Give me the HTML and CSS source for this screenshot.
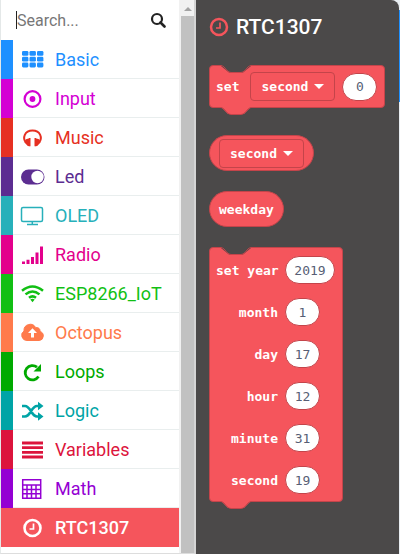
FILE: index.html
```html
<!DOCTYPE html>
<html lang="en">
<head>
<meta charset="utf-8">
<title>Toolbox</title>
<link rel="stylesheet" href="styles.css">
</head>
<body>
<main class="editor">
  <aside class="toolbox">
    <div class="tools">
      <form class="search" role="search">
        <span class="caret"></span>
        <input type="search" placeholder="Search..." aria-label="Search">
        <button type="button" aria-label="Search"><svg width="16" height="16" viewBox="0 0 16 16" fill="none" stroke="#222"><circle cx="7" cy="7" r="5" stroke-width="2.200"/><path d="M10.500 10.500l4 4" stroke-width="2.600" stroke-linecap="round"/></svg></button>
      </form>
      <nav>
        <a href="#" class="row basic"><svg viewBox="0 0 22 22"><g fill="currentColor"><rect x="0" y="2" width="6.400" height="4.800" rx="1.300"/><rect x="7.500" y="2" width="6.400" height="4.800" rx="1.300"/><rect x="15" y="2" width="6.400" height="4.800" rx="1.300"/><rect x="0" y="7.800" width="6.400" height="4.800" rx="1.300"/><rect x="7.500" y="7.800" width="6.400" height="4.800" rx="1.300"/><rect x="15" y="7.800" width="6.400" height="4.800" rx="1.300"/><rect x="0" y="13.600" width="6.400" height="4.800" rx="1.300"/><rect x="7.500" y="13.600" width="6.400" height="4.800" rx="1.300"/><rect x="15" y="13.600" width="6.400" height="4.800" rx="1.300"/></g></svg>Basic</a>
        <a href="#" class="row input"><svg viewBox="0 0 22 22"><circle cx="10.500" cy="11" r="7.900" fill="none" stroke="currentColor" stroke-width="2.200"/><circle cx="10.500" cy="11" r="2.900" fill="currentColor"/></svg>Input</a>
        <a href="#" class="row music"><svg viewBox="0 0 22 22"><path d="M4 15.500C.200 11 2.500 3.600 10.500 3.600S20.800 11 17 15.500" fill="none" stroke="currentColor" stroke-width="2"/><path d="M4 12.200l3.300-1v8l-1.500-.200L2.500 15.500zM17 12.200l-3.300-1v8l1.500-.200 3.300-3.500z" fill="currentColor"/><path d="M7 11h1.500v8.200H7zM12.500 11H14v8.200h-1.500z" fill="currentColor"/></svg>Music</a>
        <a href="#" class="row led"><svg viewBox="0 0 22 22"><rect x="-1" y="3.500" width="23.500" height="15" rx="7.500" fill="currentColor"/><circle cx="15.500" cy="11" r="6.200" fill="#fff"/></svg>Led</a>
        <a href="#" class="row oled"><svg viewBox="0 0 22 22"><rect x="-.500" y="2.500" width="21" height="14" rx="1.500" fill="none" stroke="currentColor" stroke-width="1.500"/><path d="M10.300 16.500v3M5 19.500h11" stroke="currentColor" stroke-width="1.500"/></svg>OLED</a>
        <a href="#" class="row radio"><svg viewBox="0 0 22 22"><path d="M0 17.500h3v2.500H0zM4.500 15.800h3V20h-3zM9 13h3v7H9zM13.500 8.500h3V20h-3zM18 2.500h3V20h-3z" fill="currentColor"/></svg>Radio</a>
        <a href="#" class="row wifi"><svg viewBox="0 0 22 22"><g fill="none" stroke="currentColor" stroke-width="2.500"><path d="M0 7.700q10.500-8.500 21 0M3.500 11.400q7-5.800 14 0M7 14.800q3.500-2.800 7 0"/></g><path d="M8.300 16.600q2.200-1.800 4.400 0l-2.200 2.600z" fill="currentColor"/></svg>ESP8266_IoT</a>
        <a href="#" class="row octopus"><svg viewBox="0 0 22 22"><path d="M5 18.500A5.200 5.200 0 0 1 2 9 6.200 6.200 0 0 1 13.700 5.700 3.300 3.300 0 0 1 18 9.500 4.600 4.600 0 0 1 17 18.500z" fill="currentColor" stroke="currentColor"/><path d="M10.500 6.300l4.500 4.600h-3v4.600H9v-4.600H6z" fill="#fff"/></svg>Octopus</a>
        <a href="#" class="row loops"><svg viewBox="0 0 22 22"><path d="M16.500 15.600A7.200 7.200 0 1 1 15 6.200" fill="none" stroke="currentColor" stroke-width="2.800"/><path d="M19 3v7.500h-7.500z" fill="currentColor"/></svg>Loops</a>
        <a href="#" class="row logic"><svg viewBox="0 0 22 22"><path d="M0 6h3C8.500 6 9.500 16.500 15 16.500h3M0 16.500h3C8.500 16.500 9.500 6 15 6h3" fill="none" stroke="currentColor" stroke-width="2.700"/><path d="M16 1.800L21.500 6 16 10.200zM16 12.300l5.500 4.200-5.500 4.200z" fill="currentColor"/></svg>Logic</a>
        <a href="#" class="row variables"><svg viewBox="0 0 22 22"><path d="M0 4h21M0 8.700h21M0 13.400h21M0 18h21" stroke="currentColor" stroke-width="2.800"/></svg>Variables</a>
        <a href="#" class="row math"><svg viewBox="0 0 22 22"><path d="M.700 1.700h18v18.600H.700zM.700 7h18M.700 11.400h18M.700 15.800h18M5 7v13M9.500 7v13M14 7v13" fill="none" stroke="currentColor" stroke-width="1.500"/></svg>Math</a>
        <a href="#" class="row rtc" aria-current="true"><svg viewBox="0 0 22 22"><circle cx="10.500" cy="11" r="8" fill="none" stroke="currentColor" stroke-width="2.600"/><path d="M11.500 6.500v5.500H7.500" fill="none" stroke="currentColor" stroke-width="1.700"/></svg>RTC1307</a>
      </nav>
    </div>
    <div class="scrollbar"><span class="up"></span><span class="thumb"></span></div>
  </aside>
  <section class="flyout">
    <h1><svg width="20" height="20" viewBox="0 0 20 20" fill="none" stroke="#f5555c"><circle cx="10" cy="10" r="8" stroke-width="2.500"/><path d="M11 5.500V11H7" stroke-width="1.700"/></svg>RTC1307</h1>

    <div class="block setter">
      <svg class="notch" viewBox="0 0 30 8"><path class="gap" d="M0 0h30v1L22 7.500H8L0 1z"/><path class="edge" d="M0 .500Q2 1 3 2L6 5.500Q8 7.500 10 7.500H20Q22 7.500 24 5.500L27 2Q28 1 30 .500"/></svg>
      <label for="part">set</label>
      <span class="drop"><select id="part"><option>second</option></select></span>
      <input class="num" value="0" aria-label="value">
      <svg class="tab" viewBox="0 0 30 8"><path class="fill" d="M0 0h30L23 7H7z"/><path class="edge" d="M0 .500Q2 1 3 2L6 5.500Q8 7.500 10 7.500H20Q22 7.500 24 5.500L27 2Q28 1 30 .500"/></svg>
    </div>

    <div class="pill"><span class="drop"><select aria-label="time part"><option>second</option></select></span></div>
    <div class="pill">weekday</div>

    <div class="block times">
      <svg class="notch" viewBox="0 0 30 8"><path class="gap" d="M0 0h30v1L22 7.500H8L0 1z"/><path class="edge" d="M0 .500Q2 1 3 2L6 5.500Q8 7.500 10 7.500H20Q22 7.500 24 5.500L27 2Q28 1 30 .500"/></svg>
      <label for="year">set year</label><input class="num wide" id="year" value="2019">
      <label for="month">month</label><input class="num" id="month" value="1">
      <label for="day">day</label><input class="num" id="day" value="17">
      <label for="hour">hour</label><input class="num" id="hour" value="12">
      <label for="minute">minute</label><input class="num" id="minute" value="31">
      <label for="sec">second</label><input class="num" id="sec" value="19">
      <svg class="tab" viewBox="0 0 30 8"><path class="fill" d="M0 0h30L23 7H7z"/><path class="edge" d="M0 .500Q2 1 3 2L6 5.500Q8 7.500 10 7.500H20Q22 7.500 24 5.500L27 2Q28 1 30 .500"/></svg>
    </div>
  </section>
</main>
</body>
</html>
```
FILE: styles.css
```css
* { box-sizing: border-box; }
body { margin: 0; font-family: Roboto, sans-serif; background: #e9eef2; }
.editor { display: flex; min-height: 100vh; background: linear-gradient(#1e90ff 0 0) right 10px / 1px 92px no-repeat; }
.toolbox { display: flex; flex: none; background: #fff; border-left: 1px solid #e4e8e8; border-right: 2px solid #d4d4d4; border-bottom: 1px solid #ddd; }
.tools { width: 178px; }
.search { display: flex; align-items: center; height: 40px; padding: 0 13px 0 15px; }
.caret { width: 1px; height: 18px; background: #222; margin-bottom: 1px; }
.search input { flex: 1; min-width: 0; border: 0; padding: 0; outline: 0; font: 16px Roboto, sans-serif; background: none; }
.search input::placeholder { color: #777; }
.search button { border: 0; padding: 0; background: none; display: flex; }
.row { display: flex; align-items: center; gap: 11px; height: 39px; padding-left: 9px; border-left: 12px solid currentColor; font-size: 18px; text-decoration: none; background: linear-gradient(#e9eeee 0 0) bottom / 100% 1px no-repeat #fff; }
.row svg { width: 22px; height: 22px; overflow: visible; }
.basic { color: #1e90ff; }
.input { color: #d400d4; }
.music { color: #e63022; }
.led { color: #5c2d91; }
.oled { color: #27b0ba; }
.radio { color: #e3008c; }
.wifi { color: #12bf14; }
.octopus { color: #ff7a4b; }
.loops { color: #00aa00; }
.logic { color: #00a4a6; }
.variables { color: #dc143c; }
.math { color: #9400d3; }
.row.rtc { color: #fff; background: #f5555c; border-color: #f5555c; font-weight: 500; }
.scrollbar { width: 15px; padding: 7px 0 0 2px; background: #f1f1f1; display: flex; flex-direction: column; gap: 5px; }
.up { align-self: center; border: 4px solid transparent; border-top: 0; border-bottom-color: #a3a3a3; }
.thumb { flex: 1; background: #c1c1c1; }

.flyout { flex: 1; min-width: 0; margin-right: 1px; padding: 13px 13px 12px; background: #4b4949; border-top-right-radius: 8px; display: flex; flex-direction: column; align-items: flex-start; }
h1 { display: flex; align-items: center; gap: 7px; margin: 0 0 24px; font-size: 21px; line-height: 28px; font-weight: 500; color: #fff; }
.block { position: relative; border: 1px solid #c4444a; border-radius: 4px; background: #f5555c; }
.block, .pill, .drop select, .num { font: bold 13px "DejaVu Sans Mono", monospace; color: #fff; }
.setter { display: flex; align-items: center; height: 43px; padding: 0 7px 0 6px; margin-bottom: 27px; }
.notch, .tab { position: absolute; left: 11px; width: 30px; height: 8px; }
.notch { top: -1px; }
.tab { top: 100%; }
.gap { fill: #4b4949; }
.fill { fill: #f5555c; }
.edge { fill: none; stroke: #c4444a; }
.drop { position: relative; display: block; }
.drop::after { content: ""; position: absolute; right: 11px; top: 12px; border: 5px solid transparent; border-top-color: #fff; border-bottom: 0; pointer-events: none; }
.drop select { appearance: none; width: 85px; height: 29px; padding: 0 0 0 10px; border: 1px solid #c4444a; border-radius: 4px; background: transparent; }
.setter .drop { margin: 0 7px 0 11px; }
.num { width: 35px; height: 28px; padding: 0; border: 1px solid #c4444a; border-radius: 14px; background: #fff; color: #575e75; font-weight: normal; text-align: center; }
.num.wide { width: 50px; }
.pill { display: flex; align-items: center; height: 36px; padding: 0 9px; border: 1px solid #c4444a; border-radius: 18px; background: #f5555c; margin-bottom: 20px; }
.times { display: grid; grid-template-columns: 62px 50px; gap: 14px 7px; align-items: center; padding: 8px 7px 7px 6px; }
.times label { text-align: right; white-space: nowrap; }
```
